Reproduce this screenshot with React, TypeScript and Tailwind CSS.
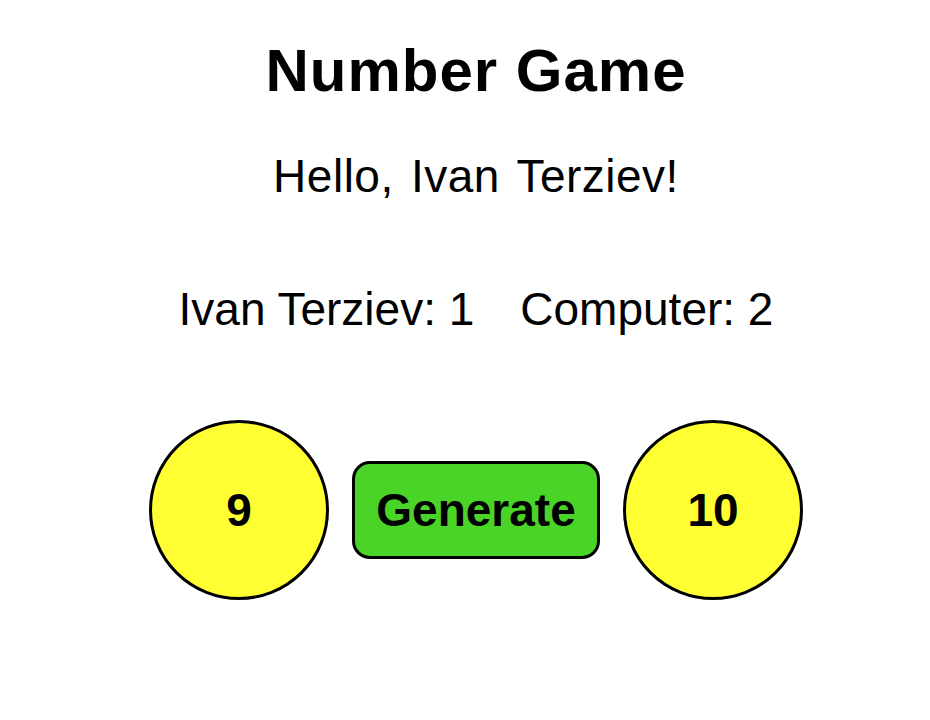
export default function App() {
  const player = "Ivan Terziev";
  return (
    <div className="min-h-screen bg-white pl-[22px] text-black" style={{ fontFamily: '"Liberation Sans", Arial, sans-serif' }}>
      <div className="flex flex-col items-center">
        <h1 className="mt-[36px] text-[60px] font-bold leading-[69px] tracking-[1px]">Number Game</h1>
        <p className="mt-[45px] text-[46px] leading-[52px] tracking-[0.5px] [word-spacing:4px]">Hello, {player}!</p>
        <div className="mt-[81px] flex gap-[46px] text-[46px] leading-[52px]">
          <span>{player}: 1</span>
          <span>Computer: 2</span>
        </div>
        <div className="mt-[85px] flex items-center gap-[23px]">
          <div className="flex h-[180px] w-[180px] items-center justify-center rounded-full border-[3px] border-black bg-[#ffff33] text-[46px] font-bold">
            9
          </div>
          <button className="h-[98px] w-[248px] rounded-[18px] border-[3px] border-black bg-[#4ad427] text-[46px] font-bold">
            Generate
          </button>
          <div className="flex h-[180px] w-[180px] items-center justify-center rounded-full border-[3px] border-black bg-[#ffff33] text-[46px] font-bold">
            10
          </div>
        </div>
      </div>
    </div>
  );
}
